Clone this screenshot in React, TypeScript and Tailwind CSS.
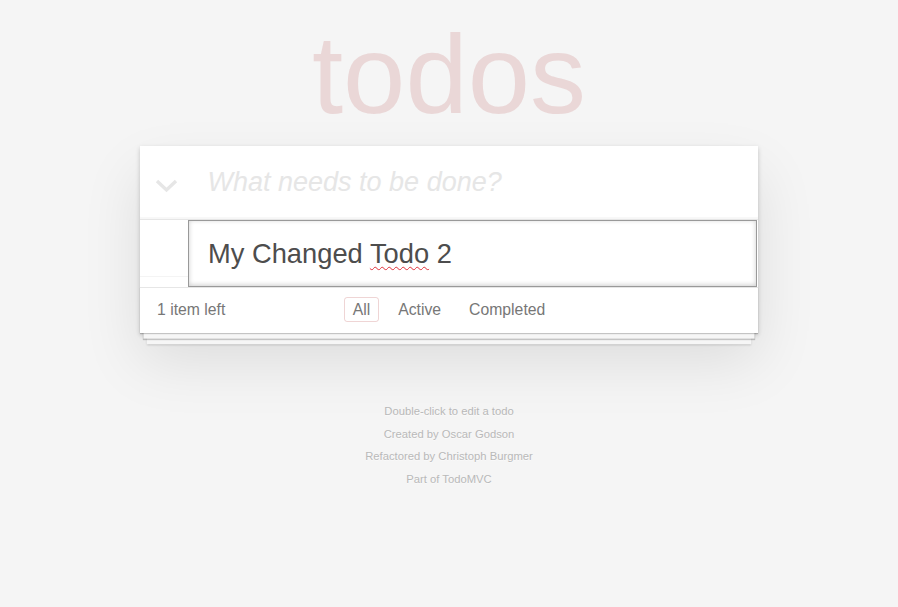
import React from "react";

const filters = ["All", "Active", "Completed"];

export default function App() {
  return (
    <div className="min-h-screen bg-[#f5f5f5] font-['Liberation_Sans',Arial,sans-serif] text-[#4d4d4d]">
      <div className="mx-auto w-[618px] pt-[19px]">
        <h1 className="mb-[15px] text-center text-[112px] leading-[112px] font-thin text-[rgba(175,47,47,0.15)]">
          todos
        </h1>

        <section className="relative bg-white shadow-[0_2px_4.5px_0_rgba(0,0,0,0.2),0_28px_56px_0_rgba(0,0,0,0.1)]">
          <header className="relative h-[73px] shadow-[inset_0_-2px_1px_rgba(0,0,0,0.03)]">
            <div className="absolute left-[15px] top-[33px]">
              <svg width="23" height="14" viewBox="0 0 23 14" fill="none">
                <polyline
                  points="2,2 11.5,11 21,2"
                  stroke="#e6e6e6"
                  strokeWidth="3.4"
                  strokeLinejoin="miter"
                />
              </svg>
            </div>
            <div className="pl-[67.5px] pt-[17.5px] text-[27px] leading-[37.8px] italic text-[#e6e6e6]">
              What needs to be done?
            </div>
          </header>

          <div className="border-t border-[#e6e6e6]">
            <div className="flex">
              <div className="h-[57px] w-[48px] border-b border-[#f4f4f4]" />
              <div className="h-[67px] w-[569px] border border-[#999] pl-[19px] pr-[18px] py-[13.5px] text-[27.3px] leading-[37.8px] text-[#4d4d4d] shadow-[inset_0_-1px_5px_0_rgba(0,0,0,0.2)]">
                My Changed{" "}
                <span className="underline decoration-wavy decoration-[#e0303a] decoration-1 underline-offset-[3px]">
                  Todo
                </span>{" "}
                2
              </div>
            </div>
          </div>

          <footer className="relative flex h-[46px] items-center border-t border-[#e6e6e6] px-[17px] pb-[2px] text-[15.75px] text-[#777] shadow-[0_1px_1px_rgba(0,0,0,0.2),0_9px_0_-3.4px_#f6f6f6,0_10px_1px_-3.4px_rgba(0,0,0,0.2),0_18px_0_-6.75px_#f6f6f6,0_19px_2px_-6.75px_rgba(0,0,0,0.2)]">
            <span>1 item left</span>
            <ul className="absolute inset-x-0 top-[9px] flex justify-center gap-[10px]">
              {filters.map((f, i) => (
                <li key={f}>
                  <a
                    className={
                      "block rounded-[3px] border px-[8px] py-[1.5px] leading-[20px] " +
                      (i === 0 ? "border-[rgba(175,47,47,0.2)]" : "border-transparent")
                    }
                  >
                    {f}
                  </a>
                </li>
              ))}
            </ul>
          </footer>
        </section>

        <div className="mt-[73px] text-center text-[11.25px] leading-[11.25px] text-[#b9b9b9] [text-shadow:0_1px_0_rgba(255,255,255,0.5)]">
          <p>Double-click to edit a todo</p>
          <p className="mt-[11.25px]">Created by Oscar Godson</p>
          <p className="mt-[11.25px]">Refactored by Christoph Burgmer</p>
          <p className="mt-[11.25px]">Part of TodoMVC</p>
        </div>
      </div>
    </div>
  );
}
